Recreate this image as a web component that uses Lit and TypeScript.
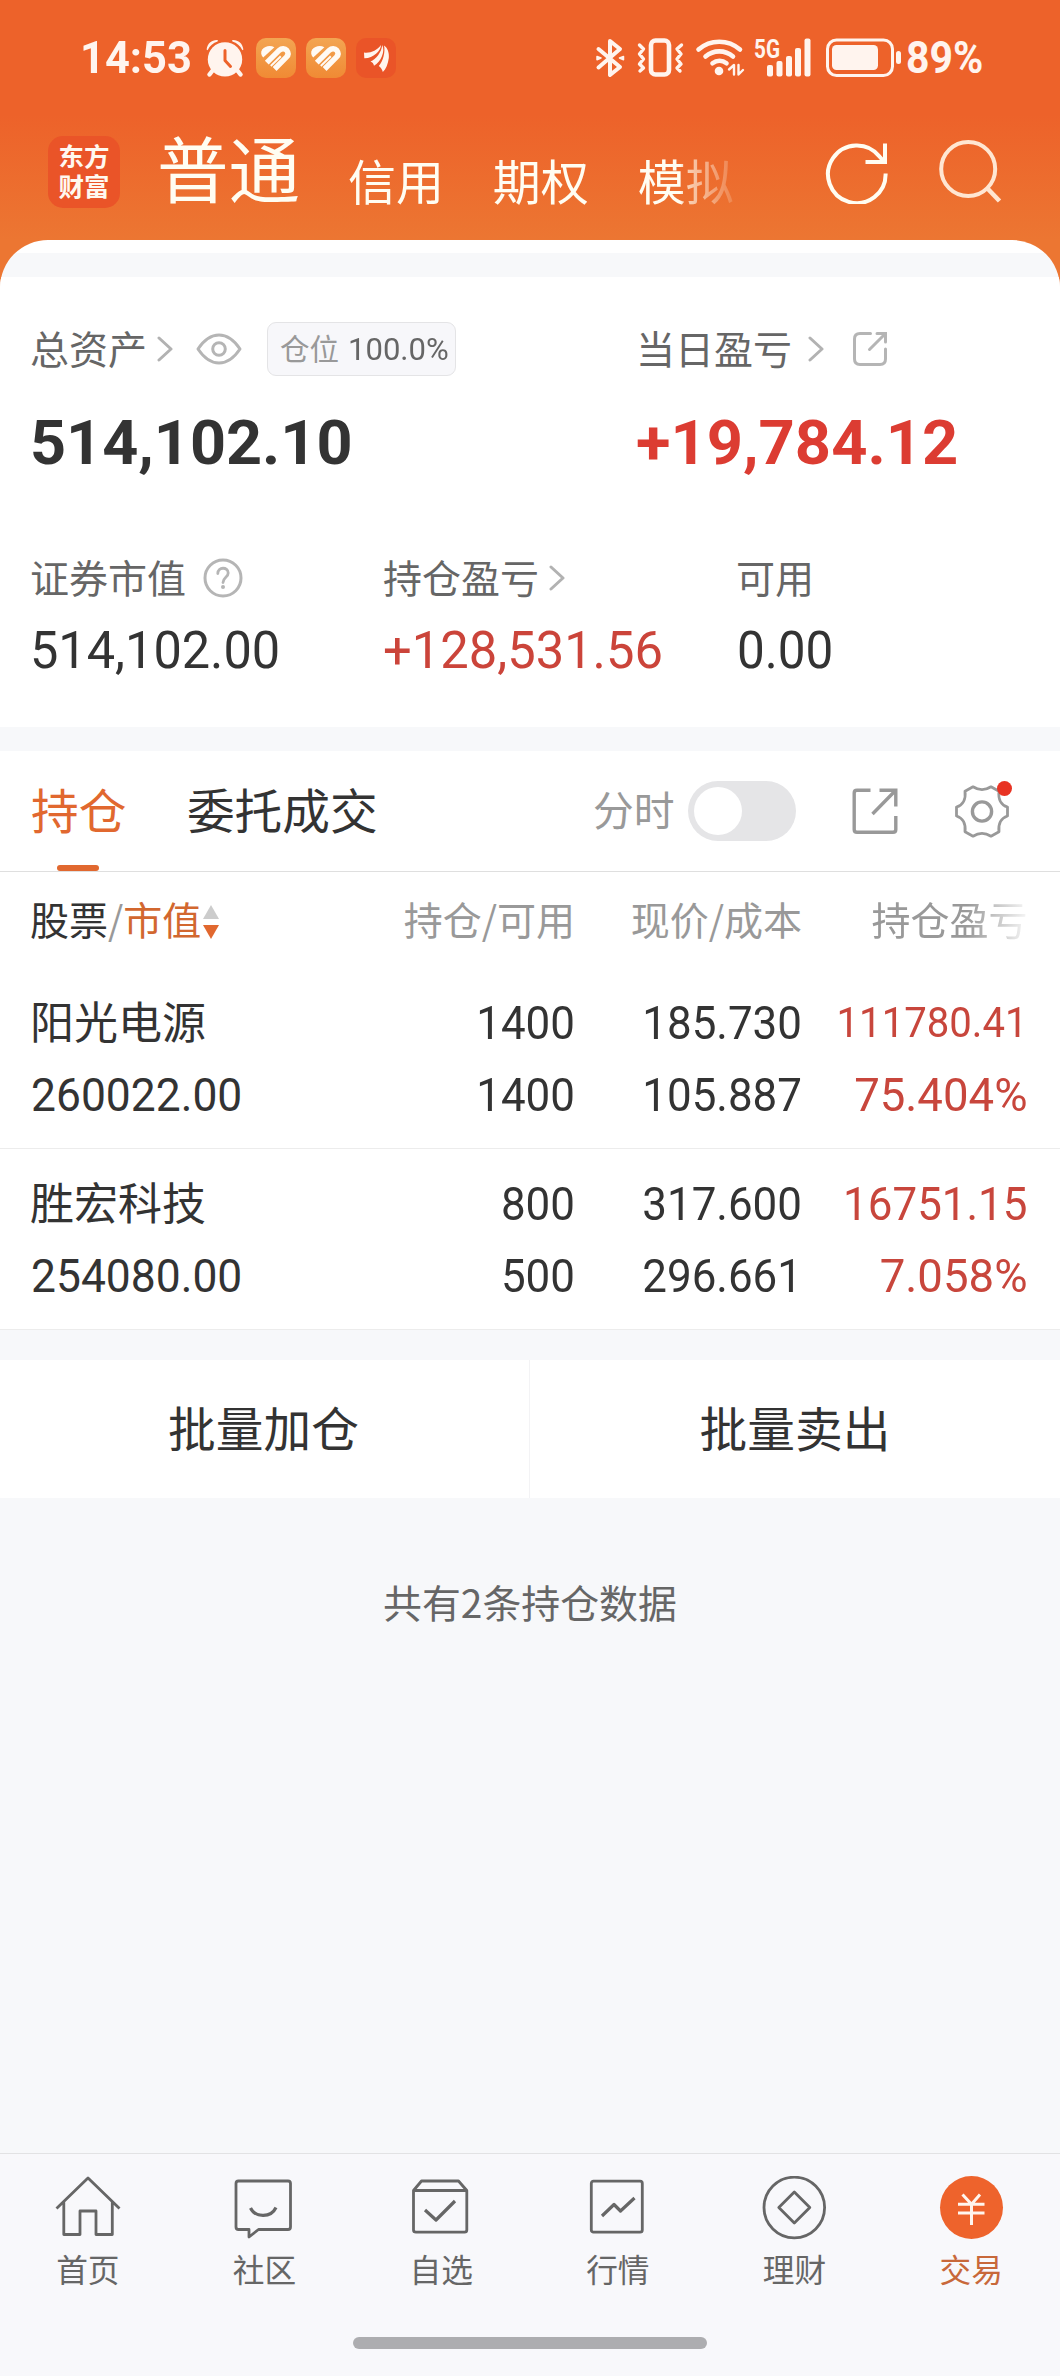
import { LitElement, html, css, svg } from "lit";
import { customElement, property } from "lit/decorators.js";

const chevron = html`<svg class="chev" width="16" height="26" viewBox="0 0 16 26" fill="none" stroke="#b2b2b2" stroke-width="3" stroke-linecap="round" stroke-linejoin="round"><path d="M2 2 L14 13 L2 24"/></svg>`;

const heart = html`<svg width="40" height="40" viewBox="0 0 40 40">
  <defs><linearGradient id="hg" x1="0" y1="0" x2="0" y2="1"><stop offset="0" stop-color="#f3a552"/><stop offset="1" stop-color="#f08a34"/></linearGradient></defs>
  <rect width="40" height="40" rx="10" fill="url(#hg)"/>
  <path d="M7.2 19.6 L18.4 9.2 C14.4 6.8 9 7.8 6.2 11.4 C4.4 14 5 17.4 7.2 19.6Z" fill="#fffaf4"/>
  <path d="M10.8 24.6 L23.4 12.2 C25.6 10.2 29 10.4 30.8 12.4 C32.6 14.6 32.4 17.2 30.4 19.2 L18.6 31" fill="none" stroke="#fffaf4" stroke-width="5.4" stroke-linejoin="round"/>
  <path d="M14.8 28 L24.8 18.2" fill="none" stroke="#fffaf4" stroke-width="2"/></svg>`;

@customElement("status-bar")
class StatusBar extends LitElement {
  static styles = css`
    :host { display: flex; height: 116px; box-sizing: border-box; padding: 36px 73px 0 80px; justify-content: space-between; color: #fff4ee; font-family: Roboto, sans-serif; }
    .side { display: flex; height: 44px; align-items: center; }
    .time { width: 126px; font-size: 45px; line-height: 44px; font-weight: 700; white-space: nowrap; }
    .time span, .pct span { display: inline-block; transform-origin: left; }
    .time span { transform: scaleX(0.965); }
    .gap { display: flex; gap: 10px; margin-left: 12px; }
    .pct { width: 79px; font-size: 45px; line-height: 44px; font-weight: 700; white-space: nowrap; }
    .pct span { transform: translateX(-2px) scaleX(0.91); }
    svg { display: block; }
    .g { font: 700 25px Roboto, sans-serif; }
  `;
  render() {
    return html`
      <div class="side">
        <div class="time"><span>14:53</span></div>
        <svg width="38" height="38" viewBox="0 0 38 38" fill="#fff4ee">
          <circle cx="19" cy="20.4" r="17.2"/>
          <path d="M.6 10.6 C1.4 4 6 .6 11.8 1 L11.6 2.6 C7 4 4 6.8 1.6 11.2Z M37.4 10.6 C36.6 4 32 .6 26.2 1 L26.4 2.6 C31 4 34 6.8 36.4 11.2Z"/>
          <path d="M7 31 L3.5 35.5 M31 31 L34.5 35.5" stroke="#fff4ee" stroke-width="4.4" stroke-linecap="round"/>
          <path d="M19 11.5 V21.5 L24.5 27.5" fill="none" stroke="#ed622a" stroke-width="3" stroke-linecap="round" stroke-linejoin="round"/>
        </svg>
        <div class="gap">${heart}${heart}
          <svg width="40" height="40" viewBox="0 0 40 40"><rect width="40" height="40" rx="10" fill="#ea5428"/>
            <g fill="#fff4ee"><path d="M8 14.5 C14 15.5 21 12.5 25 7 C25 13 17 20.5 8.3 20.2Z"/><path d="M14.5 23.5 C20 21 25.5 14.5 26.2 7 C29.5 13 25 24 18 27.8 C17.5 25.5 16.5 24.3 14.5 23.5Z"/><path d="M22.8 28 C27 23 29.5 14 28 7.4 C31.5 9.5 33.3 14.5 32.8 20 C32 26 30 31 26.8 34 C26.2 31.5 25 29.5 22.8 28Z"/></g>
          </svg>
        </div>
      </div>
      <div class="side">
        <svg width="314" height="44" viewBox="594 36 314 44" fill="none" stroke="#fff4ee" stroke-linejoin="round" stroke-linecap="round">
          <path d="M598.5 49 L620 67 L610 75 V41 L620 49 L598.5 67.5" stroke-width="4"/>
          <path d="M597 56.5 L601 58 L597 59.8Z M623.5 56.5 L619.5 58 L623.5 59.8Z" fill="#fff4ee" stroke-width="1.5"/>
          <rect x="651" y="40.5" width="18" height="34" rx="4.5" stroke-width="4.6"/>
          <path d="M639.5 45 L643.5 49 L639.5 54 L643.5 59 L639.5 64 L643.5 68 L640 71 M681.5 45 L677 49 L681 54 L677 59 L681 64 L677 68 L680 71" stroke-width="3.4"/>
          <g stroke-width="4.6"><path d="M698.5 49.5 A31.5 31.5 0 0 1 740 49.5"/><path d="M705.5 56.5 A21 21 0 0 1 733 56.5"/><path d="M712.5 63.3 A11.5 11.5 0 0 1 726.5 63.3"/></g>
          <circle cx="719" cy="71" r="4.3" fill="#fff4ee" stroke="none"/>
          <path d="M729 69.5 L734 65 V74.5 M738.5 65 V74.5 L743 70" stroke-width="2.4"/>
          <text class="g" x="754" y="57.5" fill="#fff4ee" stroke="none" textLength="26" lengthAdjust="spacingAndGlyphs">5G</text>
          <g fill="#fff4ee" stroke="none"><rect x="767" y="65" width="6" height="11.5" rx="2"/><rect x="776.5" y="61" width="6" height="15.5" rx="2"/><rect x="786" y="56" width="6" height="20.5" rx="2"/><rect x="795" y="48" width="6" height="28.5" rx="2"/><rect x="804.5" y="38.5" width="6" height="38" rx="2"/></g>
          <rect x="827.5" y="40" width="65" height="35.5" rx="9" stroke-width="3"/>
          <rect x="832" y="45" width="46" height="25" rx="4.5" fill="#fff4ee" stroke="none"/>
          <rect x="896" y="51" width="5" height="13" rx="2.5" fill="#fff4ee" stroke="none"/>
        </svg>
        <div class="pct"><span>89%</span></div>
      </div>`;
  }
}

@customElement("account-header")
class AccountHeader extends LitElement {
  static styles = css`
    :host { display: flex; height: 124px; color: #fffdf2; font-family: "Noto Sans CJK SC", sans-serif; padding-left: 48px; }
    .logo { width: 72px; height: 72px; margin-top: 20px; border-radius: 15px; background: #ea5428; font-weight: 700; font-size: 25.5px; line-height: 30px; text-align: center; padding-top: 3.5px; box-sizing: border-box; color: #fff8f0; flex: none; }
    .main { font-size: 71.5px; line-height: 80px; margin: 10px 0 0 37px; width: 191px; flex: none; }
    .tabs { display: flex; gap: 48.8px; font-size: 48px; line-height: 72px; height: 78px; margin-top: 27px; white-space: nowrap; width: 392px; flex: none; -webkit-mask-image: linear-gradient(90deg, #000 332px, rgba(0,0,0,.72) 336px, rgba(0,0,0,.15) 386px); mask-image: linear-gradient(90deg, #000 332px, rgba(0,0,0,.72) 336px, rgba(0,0,0,.15) 386px); }
    .tools { display: flex; gap: 49px; margin: 22px 0 0 84.5px; }
  `;
  render() {
    return html`
      <div class="logo">东方<br>财富</div>
      <div class="main">普通</div>
      <div class="tabs"><span>信用</span><span>期权</span><span>模拟</span></div>
      <div class="tools">
        <svg width="64" height="66" viewBox="0 0 64 66" fill="none" stroke="#fffdf2" stroke-width="4"><path d="M60.6 35.5 A28.8 28.8 0 1 1 54.5 18.5 L58 22.5"/><path d="M60 5.5 V24 H40.5"/></svg>
        <svg width="64" height="66" viewBox="0 0 64 66" fill="none" stroke="#ffe6d2" stroke-width="4"><circle cx="30.2" cy="31" r="27"/><path d="M49 50 L61.5 63" stroke-width="4.6"/></svg>
      </div>`;
  }
}

@customElement("asset-summary")
class AssetSummary extends LitElement {
  static styles = css`
    :host { display: block; height: 450px; box-sizing: border-box; padding: 45px 0 0 30px; background: #fff; font-family: "Noto Sans CJK SC", sans-serif; color: #666; }
    .top { display: grid; grid-template-columns: 606px 1fr; }
    .bottom { display: grid; grid-template-columns: 353px 353px 1fr; margin-top: 76px; }
    .label { display: flex; align-items: center; height: 54px; font-size: 39px; line-height: 54px; white-space: nowrap; }
    .label b { font-weight: 400; position: relative; top: -2px; }
    svg { display: block; flex: none; }
    .big { height: 64px; margin-top: 35px; font: 700 62px/64px Roboto, sans-serif; color: #333; white-space: nowrap; }
    .big.up, .val.up { color: #dc3c32; }
    .val.up { color: #cb443a; }
    .val { height: 60px; margin-top: 16px; font: 400 51.5px/60px Roboto, sans-serif; color: #333; white-space: nowrap; }
    .badge { display: flex; box-sizing: border-box; width: 189px; height: 54px; border: 1px solid #e4e4e6; border-radius: 9px; background: #f7f7fa; font-size: 29.5px; line-height: 48px; color: #999; padding-left: 12px; margin-left: 25px; }
    .badge i { font: 400 32px/52px Roboto, sans-serif; color: #666; margin-left: 9px; transform: scaleX(.97); transform-origin: left; }
    .fit { display: inline-block; transform-origin: left; }
    .c1 { margin-left: 10px; } .c2 { margin-left: 16px; } .c3 { margin-left: 10px; }
    .eye { margin-left: 23px; } .share { margin-left: 28px; } .help { margin-left: 17px; }
    .chev { display: block; }
    .n1 { transform: scaleX(1.015); } .n2 { transform: scaleX(1.02); } .n3 { transform: scaleX(.98); } .n4 { transform: scaleX(.984); } .n5 { transform: translateX(1px) scaleX(.96); }
  `;
  render() {
    return html`
      <div class="top">
        <div>
          <div class="label"><b>总资产</b><span class="c1">${chevron}</span>
            <svg class="eye" width="46" height="32" viewBox="0 0 46 32" fill="none" stroke="#b5b5b5" stroke-width="3"><path d="M2 16 C8 7 15 2 23 2 S38 7 44 16 C38 25 31 30 23 30 S8 25 2 16Z" stroke-linejoin="round"/><circle cx="23" cy="16" r="6.3"/></svg>
            <div class="badge">仓位<i>100.0%</i></div>
          </div>
          <div class="big"><span class="fit n1">514,102.10</span></div>
        </div>
        <div>
          <div class="label"><b>当日盈亏</b><span class="c2">${chevron}</span>
            <svg class="share" width="36" height="36" viewBox="0 0 36 36" fill="none" stroke="#b5b5b5" stroke-width="3" stroke-linecap="round"><path d="M18.5 2.5 H8 Q2.5 2.5 2.5 8 V28 Q2.5 33.5 8 33.5 H28 Q33.5 33.5 33.5 28 V18"/><path d="M25 2.5 H33.5 V11 M33 3 L17.5 18.5"/></svg>
          </div>
          <div class="big up"><span class="fit n2">+19,784.12</span></div>
        </div>
      </div>
      <div class="bottom">
        <div>
          <div class="label"><b>证券市值</b>
            <svg class="help" width="40" height="40" viewBox="0 0 40 40"><circle cx="20" cy="20" r="18" fill="none" stroke="#b5b5b5" stroke-width="3"/><path d="M14.8 15.5 C14.8 8.5 25.2 8.7 25.2 15 C25.2 19.2 20 19.3 20 24.5" fill="none" stroke="#b5b5b5" stroke-width="2.8" stroke-linecap="round"/><circle cx="20" cy="29" r="2" fill="#b5b5b5"/></svg>
          </div>
          <div class="val"><span class="fit n3">514,102.00</span></div>
        </div>
        <div>
          <div class="label"><b>持仓盈亏</b><span class="c3">${chevron}</span></div>
          <div class="val up"><span class="fit n4">+128,531.56</span></div>
        </div>
        <div>
          <div class="label"><b>可用</b></div>
          <div class="val"><span class="fit n5">0.00</span></div>
        </div>
      </div>`;
  }
}

interface Holding { name: string; value: string; qty: string; avail: string; price: string; cost: string; gain: string; pct: string; }
const holdings: Holding[] = [
  { name: "阳光电源", value: "260022.00", qty: "1400", avail: "1400", price: "185.730", cost: "105.887", gain: "111780.41", pct: "75.404%" },
  { name: "胜宏科技", value: "254080.00", qty: "800", avail: "500", price: "317.600", cost: "296.661", gain: "16751.15", pct: "7.058%" },
];

@customElement("holdings-panel")
class HoldingsPanel extends LitElement {
  static styles = css`
    :host { display: block; background: #fff; font-family: "Noto Sans CJK SC", sans-serif; color: #333; white-space: nowrap; }
    .bar { display: flex; height: 121px; box-sizing: border-box; border-bottom: 1px solid #dfdfdf; padding-left: 31px; }
    .tab { position: relative; font-size: 47.7px; line-height: 116px; height: 120px; }
    .tab.on { color: #e1682f; margin-right: 60.5px; }
    .tab.on::after { content: ""; position: absolute; left: 26px; bottom: 0; width: 42px; height: 6px; border-radius: 3px; background: #e1682f; }
    .tail { display: flex; margin-left: auto; height: 120px; align-items: center; width: 467px; }
    .tail span { font-size: 40.8px; line-height: 116px; height: 120px; color: #999; }
    .toggle { width: 108px; height: 60px; border-radius: 30px; background: #e5e5e7; margin-left: 13.5px; box-sizing: border-box; padding: 6px; flex: none; }
    .knob { width: 48px; height: 48px; border-radius: 50%; background: #fff; }
    .out { margin-left: 56px; flex: none; }
    .gear { position: relative; display: block; width: 54px; height: 53px; margin-left: 57px; flex: none; }
    .gear svg { display: block; }
    .dot { position: absolute; right: -3px; top: -4px; width: 15px; height: 15px; border-radius: 50%; background: #e83323; }
    .grid { display: grid; grid-template-columns: 344px 201px 227px 225.5px; padding-left: 30px; }
    .head { height: 92px; font-size: 39px; line-height: 92px; color: #999; }
    .head .first { display: flex; color: #333; }
    .head .first i { font-style: normal; color: #999; }
    .head .first b { font-weight: 400; color: #d2672f; }
    .sort { margin: 33px 0 0 2px; }
    .r { text-align: right; }
    .fade { -webkit-mask-image: linear-gradient(90deg, #000 165px, rgba(0,0,0,.08) 226px); mask-image: linear-gradient(90deg, #000 165px, rgba(0,0,0,.08) 226px); }
    .row { box-sizing: border-box; padding-top: 23px; height: 185px; border-bottom: 1px solid #ececec; }
    .row + .row { padding-top: 19px; height: 181px; }
    .cell div { height: 72px; line-height: 72px; font-family: Roboto, sans-serif; font-size: 46px; transform: scaleX(.955); transform-origin: right; }
    .cell.first div { transform-origin: left; transform: translateX(1px) scaleX(.965); }
    .cell div.name, .cell.first div.name { font-family: "Noto Sans CJK SC", sans-serif; font-size: 44px; transform: none; line-height: 67px; }
    .up { color: #c8463c; }
    .cell .small { font-size: 42px; }
    .cell div.pct { transform: scaleX(.99); }
  `;
  render() {
    return html`
      <div class="bar">
        <div class="tab on">持仓</div><div class="tab">委托成交</div>
        <div class="tail"><span>分时</span><div class="toggle"><div class="knob"></div></div>
          <svg class="out" width="46" height="47" viewBox="0 0 46 47" fill="none" stroke="#999" stroke-width="3.4"><path d="M18.5 2.3 H5 Q2.2 2.3 2.2 5 V41.5 Q2.2 44.3 5 44.3 H41 Q43.8 44.3 43.8 41.5 V28"/><path d="M27.5 2.3 H43.8 V18.5 M43 3 L20.5 26"/></svg>
          <div class="gear"><svg width="54" height="53" viewBox="0 0 54 53" fill="none" stroke="#999" stroke-width="2.8" stroke-linejoin="round"><path d="M18 1.8 Q27 7.5 36 1.8 L44 6.2 C43 14 46 20 52.5 22 V31 C46 33 43 39 44 46.8 L36 51.2 Q27 45.5 18 51.2 L10 46.8 C11 39 8 33 1.5 31 V22 C8 20 11 14 10 6.2Z"/><circle cx="27" cy="26.5" r="9.6" stroke-width="3.4"/></svg><div class="dot"></div></div>
        </div>
      </div>
      <div class="grid head">
        <div class="first">股票<i>/</i><b>市值</b><svg class="sort" width="16" height="35" viewBox="0 0 16 35"><path d="M8 0 L16 14 H0Z" fill="#ccc"/><path d="M0 20 H16 L8 34Z" fill="#e1682f"/></svg></div>
        <div class="r">持仓/可用</div><div class="r">现价/成本</div><div class="r fade">持仓盈亏</div>
      </div>
      ${holdings.map((h) => html`
        <div class="grid row">
          <div class="cell first"><div class="name">${h.name}</div><div>${h.value}</div></div>
          <div class="cell r"><div>${h.qty}</div><div>${h.avail}</div></div>
          <div class="cell r"><div>${h.price}</div><div>${h.cost}</div></div>
          <div class="cell r up"><div class=${h.gain.length > 8 ? "small" : ""}>${h.gain}</div><div class="pct">${h.pct}</div></div>
        </div>`)}`;
  }
}

const navIcons = {
  home: svg`<path d="M1.5 32.5 L33 2 L64.5 32.5 M8.8 26 V58.5 H25 V35 H41 V58.5 H57.3 V26"/>`,
  chat: svg`<path d="M7 5 H56 Q58.5 5 58.5 7.5 V51 Q58.5 53.5 56 53.5 H26.5 L17 61 V53.5 H6.5 Q4 53.5 4 51 V7.5 Q4 5 6.5 5Z"/><path d="M18.5 32 C23.5 42 39 42 44 31.5" stroke-width="3.2"/>`,
  box: svg`<path d="M4.5 14.5 L12.5 5 H49.5 L57.8 14.5 V54 Q57.8 56.2 55.5 56.2 H7 Q4.5 56.2 4.5 54Z M4.5 14.5 H57.8"/><path d="M16 34 L27 44 L46 25" stroke-width="3.2"/>`,
  chart: svg`<rect x="6.3" y="5.2" width="51" height="51" rx="2.2"/><path d="M17 40 L29 28.5 L35.5 35 L49.5 22" stroke-width="3.2"/>`,
  coin: svg`<circle cx="32.3" cy="31.5" r="30.3"/><path d="M32.3 16 L47.8 31.5 L32.3 47 L16.8 31.5Z"/>`,
  trade: svg`<circle cx="32.5" cy="31.5" r="31.5" fill="#ee632c" stroke="none"/><path d="M23.5 18.5 L32.5 28.2 L41 18.5 M19 28.2 H45.5 M19 37 H45.5 M32.5 28 V49" stroke="#fff6ee" stroke-width="3"/>`,
};

@customElement("nav-item")
class NavItem extends LitElement {
  @property() icon: keyof typeof navIcons = "home";
  @property() label = "";
  @property({ type: Boolean, reflect: true }) active = false;
  static styles = css`
    :host { display: flex; flex-direction: column; align-items: center; color: #666; font: 400 31.7px/44px "Noto Sans CJK SC", sans-serif; }
    :host([active]) { color: #c8683a; }
    svg { display: block; margin-bottom: 4px; }
    span { margin-right: 1px; }
  `;
  render() {
    return html`<svg width="66" height="66" viewBox="0 0 66 66" fill="none" stroke="#666" stroke-width="2.8" stroke-linejoin="round">${navIcons[this.icon]}</svg><span>${this.label}</span>`;
  }
}

@customElement("app-root")
class AppRoot extends LitElement {
  static styles = css`
    :host { display: flex; flex-direction: column; width: 1060px; height: 2376px; background: #f7f8fa; overflow: hidden; }
    .hero { background: linear-gradient(180deg, #ed622a 0, #ed622a 115px, #ec7632 240px, #ec7632 100%); }
    .sheet { border-radius: 48px 48px 0 0; overflow: hidden; background: linear-gradient(180deg, #fff 13px, #f7f8fa 13px); }
    .sheet asset-summary { margin-top: 37px; }
    holdings-panel { margin-top: 24px; }
    .actions { display: grid; grid-template-columns: 529px 1fr; margin-top: 30px; height: 138px; background: #fff; font: 400 47.7px/134px "Noto Sans CJK SC", sans-serif; color: #333; text-align: center; }
    .actions div + div { border-left: 1px solid #f3f3f5; }
    .actions div:first-child { padding-right: 2px; }
    .note { font: 400 38.9px/56px "Noto Sans CJK SC", sans-serif; color: #666; text-align: center; margin-top: 75px; }
    nav { display: grid; grid-template-columns: repeat(6, 1fr); flex: none; margin-top: auto; height: 183px; box-sizing: border-box; padding-top: 22px; border-top: 1px solid #e2e2e4; background: #f8f8fb; }
    .home { display: flex; height: 40px; box-sizing: border-box; padding-top: 1px; background: #f8f8fb; justify-content: center; flex: none; }
    .home i { width: 354px; height: 12px; border-radius: 6px; background: #adadb0; }
  `;
  render() {
    return html`
      <div class="hero">
        <status-bar></status-bar>
        <account-header></account-header>
        <div class="sheet"><asset-summary></asset-summary></div>
      </div>
      <holdings-panel></holdings-panel>
      <div class="actions"><div>批量加仓</div><div>批量卖出</div></div>
      <div class="note">共有2条持仓数据</div>
      <nav>
        <nav-item icon="home" label="首页"></nav-item>
        <nav-item icon="chat" label="社区"></nav-item>
        <nav-item icon="box" label="自选"></nav-item>
        <nav-item icon="chart" label="行情"></nav-item>
        <nav-item icon="coin" label="理财"></nav-item>
        <nav-item icon="trade" label="交易" active></nav-item>
      </nav>
      <div class="home"><i></i></div>`;
  }
}
